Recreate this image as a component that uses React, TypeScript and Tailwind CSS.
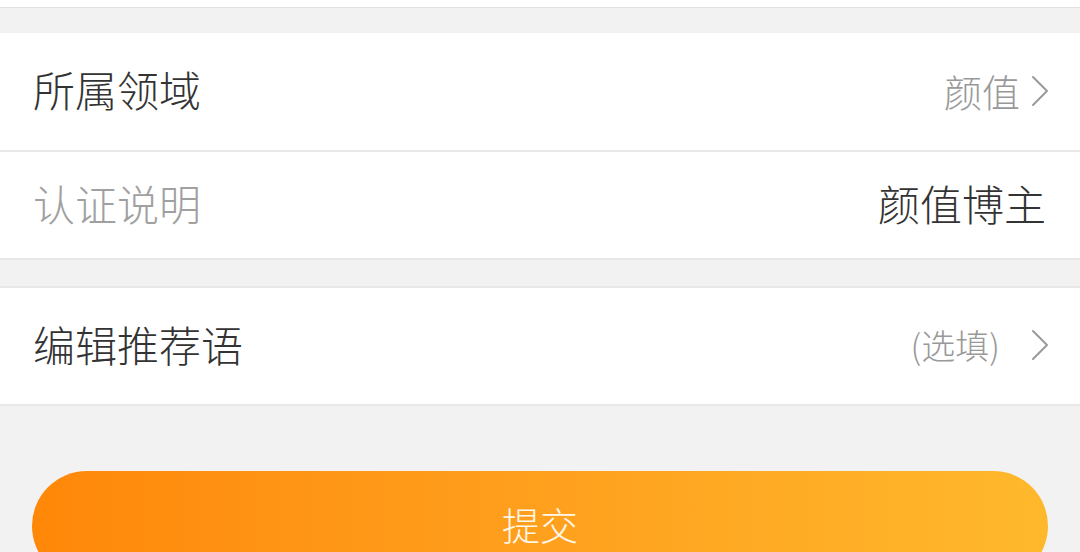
const font = { fontFamily: '"Noto Sans CJK SC", "Noto Sans", sans-serif' };

function Chevron() {
  return (
    <svg width="20" height="32" viewBox="0 0 20 32" fill="none" className="shrink-0">
      <path d="M3 2 L17 16 L3 30" stroke="#9a9a9a" strokeWidth="2" strokeLinecap="round" strokeLinejoin="round" />
    </svg>
  );
}

export default function App() {
  return (
    <div className="w-[1080px] h-[552px] overflow-hidden bg-[#f2f2f2]" style={font}>
      <div className="h-[8px] bg-white border-b border-[#e2e2e2]" />
      <div className="h-[25px]" />

      <div className="bg-white">
        <div className="h-[119px] flex items-center justify-between pl-[33px] pr-[30px] pb-[6px] border-b-2 border-[#e8e8e8]">
          <span className="text-[42px] leading-none font-light text-[#333]">所属领域</span>
          <div className="flex items-center gap-[10px] pt-[4px]">
            <span className="text-[38px] leading-none font-light text-[#999]">颜值</span>
            <Chevron />
          </div>
        </div>
        <div className="h-[108px] flex items-center justify-between pl-[33px] pr-[34px] pb-[4px] border-b-2 border-[#e8e8e8]">
          <span className="text-[42px] leading-none font-light text-[#a0a0a0]">认证说明</span>
          <span className="text-[42px] leading-none font-light text-[#333]">颜值博主</span>
        </div>
      </div>

      <div className="h-[26px]" />

      <div className="h-[120px] bg-white border-y-2 border-[#e8e8e8] flex items-center justify-between pl-[33px] pr-[30px] pb-[4px]">
        <span className="text-[42px] leading-none font-light text-[#333]">编辑推荐语</span>
        <div className="flex items-center gap-[30px] pt-[2px]">
          <span className="text-[34px] leading-none font-light text-[#999]">(选填)</span>
          <Chevron />
        </div>
      </div>

      <div className="px-[32px] pt-[65px]">
        <button className="w-full h-[110px] rounded-full bg-gradient-to-r from-[#ff8708] to-[#ffb82c] text-[38px] font-light text-[#fff7ea] flex items-center justify-center pb-[6px]">
          提交
        </button>
      </div>
    </div>
  );
}
